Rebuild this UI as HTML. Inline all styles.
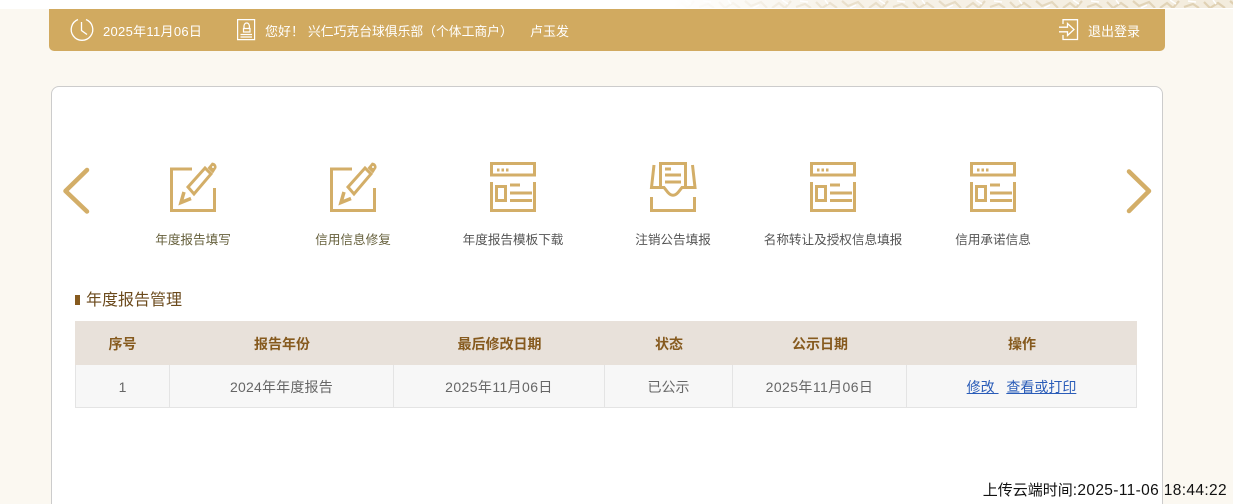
<!DOCTYPE html>
<html lang="zh"><head><meta charset="utf-8"><title>年度报告管理</title>
<style>
html,body{margin:0;padding:0;width:1233px;height:504px;overflow:hidden;background:#fbf8f1;font-family:"Liberation Sans","Noto Sans CJK SC",sans-serif}
#w{position:relative;width:1233px;height:504px;overflow:hidden;background:#fbf8f1}
.a{position:absolute;white-space:nowrap}
.top{left:0;top:0;width:1233px;height:9px;background:#fff;overflow:hidden}
.bar{left:49px;top:9px;width:1116px;height:42px;background:#d1aa60;border-radius:0 0 5px 5px}
.w{color:#fff;font-size:13px;line-height:18px;top:23px}
.card{left:51px;top:86px;width:1110px;height:440px;background:#fff;border:1px solid #ccc;border-radius:8px}
.lab{font-size:12.6px;line-height:18px;top:231px;color:#555;text-align:center;width:180px}
svg{position:absolute;overflow:visible}
.i{fill:none;stroke:#d3ae68;stroke-width:3}
.t{position:absolute;left:75px;top:321px;width:1062px;height:87px;border-collapse:separate;border-spacing:0;table-layout:fixed;font-size:14px;text-align:center}
.t th{height:44px;padding:2px 0 0;box-sizing:border-box;background:#e8e1da;color:#865a1e;font-weight:bold;border:0}
.t td{height:43px;padding:2px 0 0;box-sizing:border-box;background:#f7f7f7;color:#666;border-right:1px solid #e4e4e4;border-bottom:1px solid #e4e4e4}
.t td:first-child{border-left:1px solid #e4e4e4}
.d{letter-spacing:.4px}
.t a{color:#2a5cb8;text-decoration:underline}
</style></head><body><div id="w">
<div class="a top">
<svg width="560" height="9" style="left:673px;top:0">
<defs>
<pattern id="p" width="97" height="9" patternUnits="userSpaceOnUse"><rect width="97" height="9" fill="#f3ecdd"/><path d="M2 8 9 3 15 8 21 1M26 7 35 4 41 8M46 2 52 8 60 3 67 8M72 1 78 6 88 2 94 8" stroke="#dfd0b2" stroke-width="2.200" fill="none"/><path d="M12 0 18 4M30 1 38 2M55 0 58 4M80 8 86 5" stroke="#fff" stroke-width="1.500" fill="none"/></pattern>
<linearGradient id="g"><stop offset="0" stop-color="#fff"/><stop offset=".3" stop-color="#fff" stop-opacity=".35"/><stop offset="1" stop-color="#fff" stop-opacity="0"/></linearGradient>
</defs>
<rect width="560" height="8" fill="url(#p)"/><rect width="560" height="8" fill="url(#g)"/>
</svg>
</div>
<div class="a bar"></div>
<svg width="24" height="24" style="left:70px;top:18px" fill="none" stroke="#fff" stroke-width="1.3"><path d="M8 1.500A10.800 10.800 0 1 0 16 1.500"/><path d="M11.500 4v8.500l5.500 4"/></svg>
<div class="a w" style="left:103px;letter-spacing:.3px">2025年11月06日</div>
<svg width="20" height="22" style="left:237px;top:19px" fill="none" stroke="#fff" stroke-width="1.200"><path d="M.6.6h17v20H.6z"/><path d="M6.500 9.500h6.500v3.500H6.500zM7.500 9.500c-1-1-.8-5.500 2.200-5.500s3.200 4.500 2.200 5.500"/><path d="M3.500 15.500h11.500M3.500 18h11.500"/></svg>
<div class="a w" style="left:265px">您好！</div>
<div class="a w" style="left:308px;font-size:12.8px">兴仁巧克台球俱乐部（个体工商户）</div>
<div class="a w" style="left:530px">卢玉发</div>
<svg width="20" height="22" style="left:1059px;top:19px" fill="none" stroke="#fff" stroke-width="1.300"><path d="M4 5V.7H18.500V20.500H4V16"/><path d="M0 8.200H8.500V4.500L15 10.500 8.500 16.500V12.800H0"/></svg>
<div class="a w" style="left:1088px">退出登录</div>

<div class="a card"></div>

<svg width="30" height="50" style="left:62px;top:166px" fill="none" stroke="#d3ae68" stroke-width="4.500" stroke-linecap="round" stroke-linejoin="round"><path d="M25 4 3.500 25 25 45.500"/></svg>
<svg width="30" height="50" style="left:1125px;top:166px" fill="none" stroke="#d3ae68" stroke-width="4.500" stroke-linecap="round" stroke-linejoin="round"><path d="M4 5.500 24 25 4 45"/></svg>

<svg width="48" height="52" style="left:169px;top:161px" class="i"><path d="M23 8H2.500V49.500H45.500V27"/><path d="M19 26 36 7 42 13 25 33Z"/><path d="M15 31 12 41.500 22 37.500" stroke-width="3.500"/><path d="M38.500 7 43 1.500Q48 2 47.500 7L44 12.500Z" fill="#d3ae68" stroke="none"/><circle cx="44" cy="6" r="1" fill="#fff" stroke="none"/></svg>
<svg width="48" height="52" style="left:329px;top:161px" class="i"><path d="M23 8H2.500V49.500H45.500V27"/><path d="M19 26 36 7 42 13 25 33Z"/><path d="M15 31 12 41.500 22 37.500" stroke-width="3.500"/><path d="M38.500 7 43 1.500Q48 2 47.500 7L44 12.500Z" fill="#d3ae68" stroke="none"/><circle cx="44" cy="6" r="1" fill="#fff" stroke="none"/></svg>

<svg width="48" height="52" style="left:489px;top:161px" class="i"><path d="M2.500 2.500H45.500V14H2.500ZM2.500 21V49.500H45.500V21"/><path d="M8 9h2.500M12.500 9h2.500M17 9h2.500"/><path d="M7.500 25.500H16.500V39.500H7.500ZM21 24H31M21 32H43M21 39.500H43"/></svg>
<svg width="48" height="52" style="left:969px;top:161px" class="i"><path d="M2.500 2.500H45.500V14H2.500ZM2.500 21V49.500H45.500V21"/><path d="M8 9h2.500M12.500 9h2.500M17 9h2.500"/><path d="M7.500 25.500H16.500V39.500H7.500ZM21 24H31M21 32H43M21 39.500H43"/></svg>
<svg width="48" height="52" style="left:809px;top:161px" class="i"><path d="M2.500 2.500H45.500V14H2.500ZM2.500 21V49.500H45.500V21"/><path d="M8 9h2.500M12.500 9h2.500M17 9h2.500"/><path d="M7.500 25.500H16.500V39.500H7.500ZM21 24H31M21 32H43M21 39.500H43"/></svg>

<svg width="48" height="52" style="left:649px;top:161px" class="i"><path d="M11.500 26V2.500H36.500V26"/><path d="M16 8h6M16 14h16M16 21h16"/><path d="M5 4 2.500 26.500H15L19 31.500Q24 37 29 31.500L33 26.500H46L43.500 4"/><path d="M2.500 36V49.500H45.500V36"/></svg>

<div class="a lab" style="left:103px;color:#66603c">年度报告填写</div>
<div class="a lab" style="left:263px;color:#66603c">信用信息修复</div>
<div class="a lab" style="left:423px">年度报告模板下载</div>
<div class="a lab" style="left:583px">注销公告填报</div>
<div class="a lab" style="left:743px">名称转让及授权信息填报</div>
<div class="a lab" style="left:903px">信用承诺信息</div>

<div class="a" style="left:75px;top:295px;width:5px;height:10px;background:#865a1e"></div>
<div class="a" style="left:86px;top:290px;font-size:16px;line-height:22px;color:#6b4a1c">年度报告管理</div>

<table class="t">
<colgroup><col style="width:95px"><col style="width:224px"><col style="width:211px"><col style="width:128px"><col style="width:174px"><col style="width:230px"></colgroup>
<tr><th>序号</th><th>报告年份</th><th>最后修改日期</th><th>状态</th><th>公示日期</th><th>操作</th></tr>
<tr><td>1</td><td style="letter-spacing:.2px">2024年年度报告</td><td class="d">2025年11月06日</td><td>已公示</td><td class="d">2025年11月06日</td><td><a>修改&nbsp;</a>&nbsp;&nbsp;<a>查看或打印</a></td></tr>
</table>

<div class="a" style="right:6px;top:481px;font-size:15.5px;line-height:20px;color:#111"><span style="font-size:15px">上传云端时间</span><span style="letter-spacing:.36px">:2025-11-06 18:44:22</span></div>
</div></body></html>
